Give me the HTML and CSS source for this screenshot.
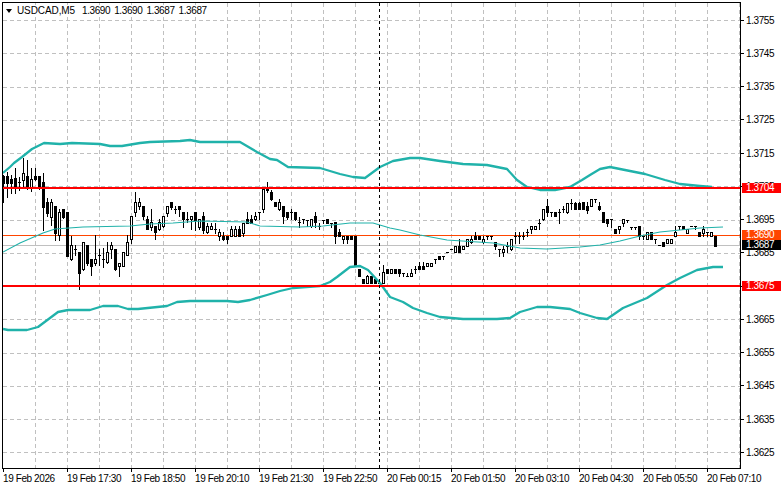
FILE: index.html
```html
<!DOCTYPE html>
<html lang="en">
<head>
    <meta charset="UTF-8">
    <meta name="viewport" content="width=device-width, initial-scale=1.0">
    <title>USDCAD,M5</title>
    <link rel="stylesheet" href="styles.css">
</head>
<body>
    <div class="terminal">
        <div class="chart-row">
            <div class="plot">
                <svg id="chart" class="chart-svg" viewBox="3 3 737 465"></svg>
                <div class="chart-title">
                    <span class="title-arrow"></span>
                    <span class="title-symbol">USDCAD,M5</span>
                    <span class="title-ohlc">1.3690</span>
                    <span class="title-ohlc">1.3690</span>
                    <span class="title-ohlc">1.3687</span>
                    <span class="title-ohlc">1.3687</span>
                </div>
            </div>
            <div class="price-axis">
                <div class="price-tick">1.3755</div>
                <div class="price-tick">1.3745</div>
                <div class="price-tick">1.3735</div>
                <div class="price-tick">1.3725</div>
                <div class="price-tick">1.3715</div>
                <div class="price-tick">1.3705</div>
                <div class="price-tick">1.3695</div>
                <div class="price-tick">1.3685</div>
                <div class="price-tick">1.3675</div>
                <div class="price-tick">1.3665</div>
                <div class="price-tick">1.3655</div>
                <div class="price-tick">1.3645</div>
                <div class="price-tick">1.3635</div>
                <div class="price-tick">1.3625</div>
                <!-- Price tags sit over the axis at their own level -->
                <div class="price-tag tag-red tag-upper">1.3704</div>
                <div class="price-tag tag-orange tag-bid">1.3690</div>
                <div class="price-tag tag-black tag-last">1.3687</div>
                <div class="price-tag tag-red tag-lower">1.3675</div>
            </div>
        </div>
        <div class="time-axis">
            <div class="time-tick">19 Feb 2026</div>
            <div class="time-tick">19 Feb 17:30</div>
            <div class="time-tick">19 Feb 18:50</div>
            <div class="time-tick">19 Feb 20:10</div>
            <div class="time-tick">19 Feb 21:30</div>
            <div class="time-tick">19 Feb 22:50</div>
            <div class="time-tick">20 Feb 00:15</div>
            <div class="time-tick">20 Feb 01:50</div>
            <div class="time-tick">20 Feb 03:10</div>
            <div class="time-tick">20 Feb 04:30</div>
            <div class="time-tick">20 Feb 05:50</div>
            <div class="time-tick">20 Feb 07:10</div>
        </div>
    </div>
    <script src="chart.js"></script>
</body>
</html>
```

FILE: styles.css
```css
* {
    margin: 0;
    padding: 0;
    box-sizing: border-box;
}

body {
    background-color: #fff;
    color: #000;
    font-family: "Liberation Sans", Arial, sans-serif;
    font-size: 10px;
    letter-spacing: -0.4px;
    overflow: hidden;
}

.terminal {
    width: 781px;
    height: 489px;
    padding: 2px 0 0 2px;
}

.chart-row {
    display: flex;
    height: 467px;
}

.plot {
    position: relative;
    width: 739px;
    height: 467px;
    border: 1px solid #000;
}

.chart-svg {
    display: block;
    width: 737px;
    height: 465px;
}

.chart-title {
    position: absolute;
    top: 2px;
    left: 3px;
    display: flex;
    align-items: center;
    height: 11px;
    background-color: #fff;
}

.title-arrow {
    width: 0;
    height: 0;
    margin-right: 5px;
    border-left: 3.5px solid transparent;
    border-right: 3.5px solid transparent;
    border-top: 4px solid #000;
}

.title-symbol {
    margin-right: 7px;
    letter-spacing: -0.1px;
}

.title-ohlc {
    margin-right: 4px;
}

.price-axis {
    position: relative;
    flex: 1;
    display: grid;
    grid-auto-rows: 33.25px;
    padding-top: 1.4px;
}

.price-tick {
    display: flex;
    align-items: center;
    gap: 2px;
}

.price-tick::before {
    content: "";
    width: 3px;
    height: 1px;
    background-color: #000;
}

.price-tag {
    position: absolute;
    left: 1px;
    width: 39px;
    height: 10px;
    padding-left: 4px;
    color: #fff;
    line-height: 10px;
}

.tag-red {
    background-color: #ff0000;
}

.tag-orange {
    background-color: #ff4500;
}

.tag-black {
    background-color: #000;
}

.tag-upper {
    top: 181px;
}

.tag-bid {
    top: 228px;
}

.tag-last {
    top: 238px;
}

.tag-lower {
    top: 279px;
}

.time-axis {
    display: flex;
    padding-left: 1px;
}

.time-tick {
    flex: 0 0 64px;
    white-space: nowrap;
}

.time-tick::before {
    content: "";
    display: block;
    width: 1px;
    height: 3px;
    margin-bottom: 1px;
    background-color: #000;
}
```

FILE: chart.js
```js
const chart = document.getElementById('chart');
const SVG_NS = 'http://www.w3.org/2000/svg';

// Candles in screen pixels: [high, body top, body bottom, low, bullish]
const candles = [
    [175,176,183,202,0],[172,176,183,197,0],[175,179,183,193,0],[168,178,187,193,0],[177,182,182,190,0],
    [158,173,180,188,1],[160,176,187,189,0],[168,179,187,191,1],[168,176,179,180,0],[176,176,187,189,0],
    [173,182,207,230,0],[198,202,213,216,0],[199,202,217,225,1],[206,206,233,240,0],[209,212,235,240,1],
    [209,209,217,218,0],[212,212,256,256,0],[236,245,259,260,1],[245,249,249,255,0],[252,252,273,289,0],
    [242,242,269,270,1],[245,245,263,265,0],[259,259,266,275,0],[235,259,263,265,1],[249,255,255,265,0],
    [248,259,259,267,0],[242,252,262,263,1],[242,245,249,258,1],[249,249,269,270,0],[263,263,266,276,1],
    [252,252,266,266,1],[235,242,255,255,1],[216,216,239,243,1],[192,202,212,216,1],[198,202,206,209,1],
    [206,206,216,219,0],[216,219,229,229,0],[209,222,227,230,1],[226,226,232,239,0],[219,222,229,230,1],
    [216,216,226,227,1],[206,206,213,216,1],[202,202,207,209,0],[206,209,209,213,0],[206,206,209,216,0],
    [212,212,219,227,0],[212,219,219,222,0],[216,216,219,229,1],[212,212,220,230,0],[219,219,227,229,1],
    [212,216,230,233,0],[223,226,232,233,1],[223,226,229,229,1],[223,229,229,233,0],[229,232,236,240,1],
    [232,236,239,240,0],[236,236,239,243,0],[226,229,236,236,1],[226,229,236,236,1],[226,229,236,236,0],
    [223,223,233,236,1],[212,219,223,223,0],[215,219,223,223,0],[212,216,219,220,1],[212,212,212,219,0],
    [189,189,209,212,1],[182,187,190,192,0],[190,192,199,200,0],[202,202,206,206,0],[199,202,209,210,1],
    [206,206,216,223,0],[212,212,217,219,0],[209,212,212,219,0],[212,212,219,220,0],[217,222,222,227,0],
    [219,219,219,223,0],[220,220,220,226,0],[219,219,226,227,1],[212,216,222,227,0],[223,226,226,229,0],
    [220,220,220,223,0],[219,219,223,223,0],[223,223,223,227,0],[222,222,236,243,0],[229,232,236,236,0],
    [236,236,239,243,1],[236,236,239,243,0],[236,236,239,239,0],[236,236,266,266,0],[269,269,276,276,0],
    [279,279,283,283,0],[275,276,283,283,1],[276,276,283,283,0],[279,279,283,283,0],[283,283,283,283,0],
    [265,272,283,283,1],[269,269,273,273,0],[269,269,273,273,1],[269,269,273,273,0],[269,269,273,276,0],
    [273,273,273,276,0],[273,276,276,276,0],[269,273,276,276,1],[266,269,269,273,0],[262,266,269,269,0],
    [262,266,269,269,0],[263,263,266,266,1],[263,263,266,266,1],[259,259,259,263,0],[256,256,259,259,0],
    [256,256,256,259,0],[252,252,252,252,0],[249,249,249,249,0],[246,246,252,252,1],[239,246,252,252,0],
    [246,246,249,249,1],[239,239,246,246,1],[236,239,242,243,1],[232,236,239,239,0],[236,236,239,239,0],
    [236,239,242,243,1],[236,236,236,239,0],[236,236,236,239,0],[242,242,246,249,0],[249,249,249,256,0],
    [246,249,252,256,1],[242,246,246,252,0],[239,239,249,250,1],[232,236,236,243,0],[232,236,236,243,0],
    [232,236,236,239,0],[229,232,232,236,0],[226,226,229,233,1],[226,226,229,229,1],[219,223,223,229,0],
    [209,209,219,220,1],[199,206,212,216,0],[212,212,212,216,0],[212,212,216,216,0],[209,212,212,223,0],
    [206,209,209,212,0],[203,203,212,213,1],[199,203,203,209,0],[202,203,209,209,0],[202,203,209,209,0],
    [202,202,209,209,0],[202,206,210,213,0],[199,199,206,206,1],[199,199,199,202,0],[202,206,209,210,0],
    [212,212,222,222,0],[219,219,223,226,0],[219,219,219,227,0],[229,229,233,233,0],[226,226,229,233,1],
    [219,219,223,226,1],[220,220,220,222,0],[227,227,227,229,0],[227,227,227,229,0],[226,226,236,239,0],
    [236,236,236,239,0],[232,232,239,239,1],[232,232,239,239,0],[239,239,239,243,0],[245,245,245,245,0],
    [242,242,246,246,0],[239,239,243,243,1],[239,239,243,243,1],[226,232,236,236,1],[226,226,226,229,0],
    [226,226,229,229,0],[229,229,233,233,1],[226,226,226,226,0],[226,226,226,229,0],[232,232,236,236,0],
    [226,229,233,236,1],[232,232,232,236,0],[232,232,236,236,1],[236,236,246,246,0]
];

// Bollinger bands as x,y points
const upperBand = '3,173 10,167 14,163 22,157 32,149 44,143 60,144 72,143 100,144 110,146 122,146 140,143 150,142 180,141 190,140 200,142 240,142 257,152 270,159 277,160 288,167 320,168 340,174 353,177 365,178 380,167 393,161 410,158 420,158 440,161 463,164 487,165 507,169 517,180 527,187 540,190 555,190 570,187 582,180 590,175 600,169 610,167 625,170 645,174 665,180 680,184 700,186 712,187';
const middleBand = '3,252 20,243 43,233 55,229 83,227 130,226 150,224 173,223 200,221 247,222 260,226 300,227 323,226 350,223 373,223 390,228 400,230 420,235 447,240 493,243 520,248 547,249 580,247 600,245 620,241 640,236 660,232 680,230 700,228 723,227';
const lowerBand = '3,329 8,330 27,330 38,327 50,318 58,312 68,310 90,310 103,306 118,306 128,309 138,309 167,306 177,302 190,301 227,301 238,302 250,300 267,295 280,291 293,288 320,286 330,282 337,277 350,267 360,266 368,270 380,283 390,297 403,302 413,308 427,313 440,317 463,319 497,319 510,318 520,312 537,307 550,307 570,309 580,313 597,318 607,319 623,308 647,298 667,285 680,278 697,270 713,267 723,267';

function add(tag, attrs) {
    const el = document.createElementNS(SVG_NS, tag);
    for (const name in attrs) {
        el.setAttribute(name, attrs[name]);
    }
    chart.appendChild(el);
    return el;
}

function hLine(y, color, width, dash) {
    add('line', {
        x1: 3, x2: 740, y1: y, y2: y,
        stroke: color,
        'stroke-width': width,
        'stroke-dasharray': dash || 'none',
        'shape-rendering': 'crispEdges'
    });
}

function vLine(x, color, dash) {
    add('line', {
        x1: x, x2: x, y1: 3, y2: 468,
        stroke: color,
        'stroke-dasharray': dash,
        'shape-rendering': 'crispEdges'
    });
}

function drawCandle(candle, i) {
    const [high, top, bottom, low, bullish] = candle;
    const left = 2 + 4 * i;

    if (low > high) {
        add('rect', { x: left + 1, y: high, width: 1, height: low - high + 1, fill: '#000', 'shape-rendering': 'crispEdges' });
    }
    if (bullish) {
        add('rect', {
            x: left + 0.5, y: top + 0.5, width: 2, height: bottom - top,
            fill: '#fff', stroke: '#000', 'shape-rendering': 'crispEdges'
        });
    } else {
        add('rect', { x: left, y: top, width: 3, height: bottom - top + 1, fill: '#000', 'shape-rendering': 'crispEdges' });
    }
}

function drawBand(points, width) {
    add('polyline', { points: points, fill: 'none', stroke: '#20b2aa', 'stroke-width': width, 'stroke-linejoin': 'round' });
}

// Grid
for (let k = 0; k < 14; k++) {
    hLine(Math.round(20 + 33.25 * k) + 0.5, '#c0c0c0', 1, '4 3');
}
for (let x = 35.5; x < 740; x += 32) {
    vLine(x, '#c0c0c0', '4 3');
}

// Bid and last price levels
hLine(245.5, '#c0c0c0', 1);
hLine(235.5, '#ff4500', 1);

candles.forEach(drawCandle);

drawBand(upperBand, 2.3);
drawBand(middleBand, 1.1);
drawBand(lowerBand, 2.3);

// Support and resistance
hLine(188, '#ff0000', 2);
hLine(286, '#ff0000', 2);

// Crosshair
vLine(379.5, '#000', '3 3');
```
